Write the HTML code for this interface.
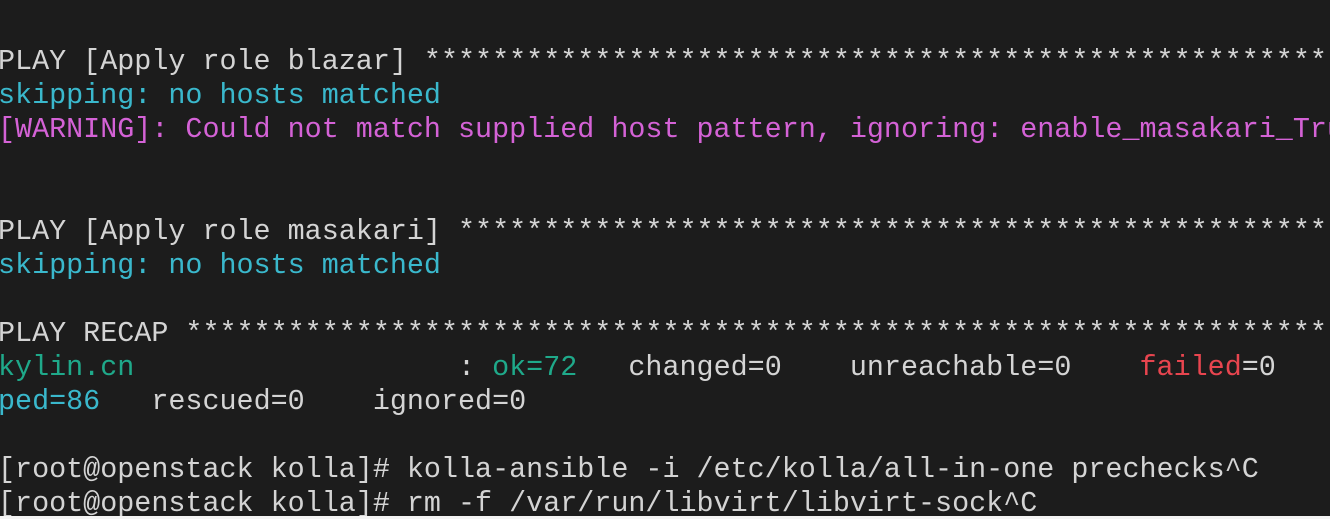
<!DOCTYPE html>
<html><head><meta charset="utf-8"><style>
html,body{margin:0;padding:0;}
body{width:1330px;height:519px;background:#1c1c1c;overflow:hidden;position:relative;}
.t{position:absolute;left:-2px;top:45px;width:1332px;height:474px;overflow:hidden;font-family:"Liberation Mono","DejaVu Sans Mono",monospace;font-size:28.4px;line-height:34px;color:#d4d4d4;white-space:pre;}
.c{color:#3ab8cc}.m{color:#d462d6}.g{color:#1fa98a}.r{color:#e8454f}
.bot{position:absolute;left:0;right:0;bottom:0;height:3px;background:#f4f4f4;}
</style></head><body>
<div class="t">PLAY [Apply role blazar] ************************************************************
<span class="c">skipping: no hosts matched</span>
<span class="m">[WARNING]: Could not match supplied host pattern, ignoring: enable_masakari_True</span>


PLAY [Apply role masakari] **********************************************************
<span class="c">skipping: no hosts matched</span>

PLAY RECAP **************************************************************************
<span class="g">kylin.cn</span>                   : <span class="g">ok=72</span>   changed=0    unreachable=0    <span class="r">failed</span>=0
<span class="c">ped=86</span>   rescued=0    ignored=0

[root@openstack kolla]# kolla-ansible -i /etc/kolla/all-in-one prechecks^C
[root@openstack kolla]# rm -f /var/run/libvirt/libvirt-sock^C</div>
<div class="bot"></div>
</body></html>
